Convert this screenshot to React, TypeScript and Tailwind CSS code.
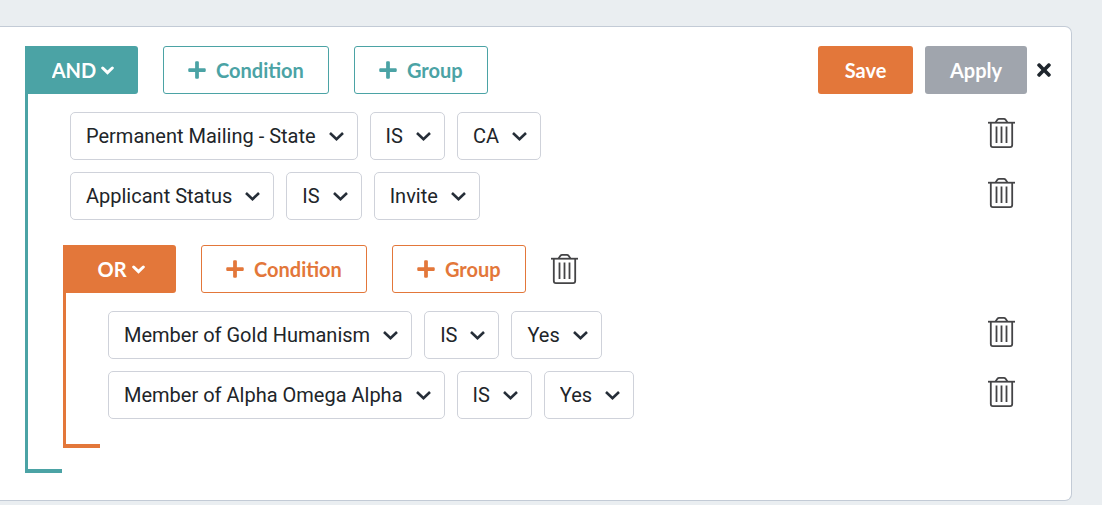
import React from "react";
import { FaPlus, FaTimes } from "react-icons/fa";
import { clsx } from "clsx";

type Condition = {
  field: string;
  operator: string;
  value: string;
};

type Group = {
  type: "AND" | "OR";
  conditions: Condition[];
  groups: Group[];
};

const filter: Group = {
  type: "AND",
  conditions: [
    { field: "Permanent Mailing - State", operator: "IS", value: "CA" },
    { field: "Applicant Status", operator: "IS", value: "Invite" },
  ],
  groups: [
    {
      type: "OR",
      conditions: [
        { field: "Member of Gold Humanism", operator: "IS", value: "Yes" },
        { field: "Member of Alpha Omega Alpha", operator: "IS", value: "Yes" },
      ],
      groups: [],
    },
  ],
};

const TrashIcon = () => (
  <svg
    viewBox="0 0 27 30"
    className="h-[30px] w-[27px]"
    fill="none"
    stroke="#444446"
    aria-hidden="true"
  >
    <path d="M0 4.7H27" strokeWidth="1.8" />
    <path d="M7.6 4.4L9.2 2Q10 .9 11.2 .9H15.8Q17 .9 17.8 2L19.4 4.4" strokeWidth="1.8" />
    <path d="M2.8 5V27Q2.8 29.1 4.9 29.1H22.1Q24.2 29.1 24.2 27V5" strokeWidth="1.8" />
    <path d="M8.5 8.5V25M13.5 8.5V25M18.5 8.5V25" strokeWidth="1.8" />
  </svg>
);

const DeleteButton = ({ label }: { label: string }) => (
  <button type="button" aria-label={label} className="cursor-pointer">
    <TrashIcon />
  </button>
);

const SelectBox = ({ label, value }: { label: string; value: string }) => (
  <div className="relative">
    <select
      aria-label={label}
      defaultValue={value}
      className="field-sizing-content h-12 appearance-none rounded-[5px] border border-[#cfd2da] bg-white pr-[41px] pl-[15px] font-['Roboto',sans-serif] text-[20px] text-[#212529]"
    >
      <option>{value}</option>
    </select>
    <svg
      viewBox="0 0 15 9"
      className="pointer-events-none absolute top-5 right-[14px] h-[9px] w-[15px]"
      fill="none"
      stroke="#262e38"
      strokeWidth="2.6"
      aria-hidden="true"
    >
      <path d="M1 1L7.5 7.2L14 1" />
    </svg>
  </div>
);

const AddButton = ({ type, children }: { type: Group["type"]; children: React.ReactNode }) => (
  <button
    type="button"
    className={clsx(
      "flex h-12 items-center gap-2.5 rounded-[3px] border bg-white px-6 text-[20px] font-bold",
      type === "AND" ? "border-[#4ba3a5] text-[#4ba3a5]" : "border-[#e3773a] text-[#e3773a]"
    )}
  >
    <FaPlus className="h-5 w-[18px]" />
    {children}
  </button>
);

const ConditionRow = ({ condition }: { condition: Condition }) => (
  <li className="flex items-start justify-between">
    <div className="flex gap-3">
      <SelectBox label="Field" value={condition.field} />
      <SelectBox label="Operator" value={condition.operator} />
      <SelectBox label="Value" value={condition.value} />
    </div>
    <div className="pt-1.5 pr-9">
      <DeleteButton label="Delete condition" />
    </div>
  </li>
);

const FilterGroup = ({
  group,
  className,
  actions,
}: {
  group: Group;
  className?: string;
  actions: React.ReactNode;
}) => {
  const isAnd = group.type === "AND";
  return (
    <div className={clsx("border-l-[3px]", isAnd ? "border-[#4ba3a5]" : "border-[#e3773a]", className)}>
      <div className="flex items-center gap-[25px]">
        <div
          className={clsx(
            "relative flex h-12 min-w-[110px] items-center justify-center rounded-r-[3px] text-white",
            isAnd ? "bg-[#4ba3a5]" : "bg-[#e3773a]"
          )}
        >
          <select
            aria-label="Group type"
            defaultValue={group.type}
            className="field-sizing-content appearance-none bg-transparent pr-[18px] text-[20px] font-bold"
          >
            <option>{group.type}</option>
          </select>
          <svg
            viewBox="0 0 13 9"
            className="pointer-events-none -ml-[13px] h-[9px] w-[13px]"
            fill="none"
            stroke="currentColor"
            strokeWidth="3"
            strokeLinecap="round"
            aria-hidden="true"
          >
            <path d="M1.7 2L6.5 6.6L11.3 2" />
          </svg>
        </div>
        <AddButton type={group.type}>Condition</AddButton>
        <AddButton type={group.type}>Group</AddButton>
        {actions}
      </div>
      <ul className="mt-[18px] mb-[25px] ml-[42px] space-y-3">
        {group.conditions.map((condition) => (
          <ConditionRow key={condition.field} condition={condition} />
        ))}
      </ul>
      {group.groups.map((child, i) => (
        <FilterGroup
          key={i}
          group={child}
          className="mb-[21px] ml-[35px]"
          actions={<DeleteButton label="Delete group" />}
        />
      ))}
      <div className={clsx("h-1 w-[34px]", isAnd ? "bg-[#4ba3a5]" : "bg-[#e3773a]")} />
    </div>
  );
};

export default function App() {
  return (
    <main className="min-h-screen bg-[#eaeef1] pt-[26px] pr-[30px] font-['Lato',sans-serif]">
      <section className="rounded-r-[7px] border border-l-0 border-[#c3cbd6] bg-white pt-[19px] pr-5 pb-[27px] pl-[25px]">
        <FilterGroup
          group={filter}
          actions={
            <div className="ml-auto flex items-center">
              <button
                type="button"
                className="h-12 min-w-[95px] rounded-[3px] bg-[#e3773a] px-6 text-[20px] font-bold text-white"
              >
                Save
              </button>
              <button
                type="button"
                className="ml-3 h-12 min-w-[102px] rounded-[3px] bg-[#a0a5ad] px-6 text-[20px] font-bold text-white"
              >
                Apply
              </button>
              <button type="button" aria-label="Close" className="ml-2.5 text-[#1f262d]">
                <FaTimes className="h-5 w-[14px]" />
              </button>
            </div>
          }
        />
      </section>
    </main>
  );
}
